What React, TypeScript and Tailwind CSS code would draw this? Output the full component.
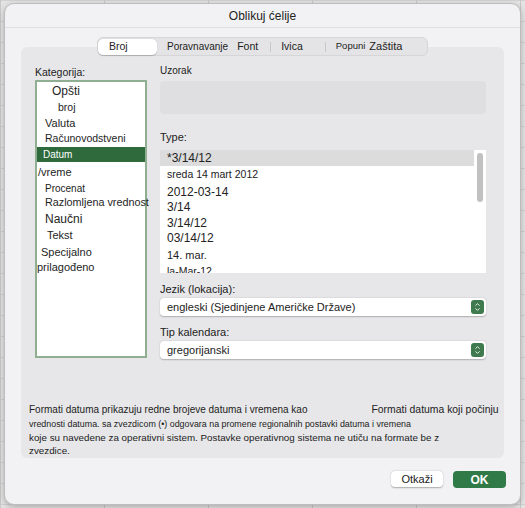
import { ChevronDown, ChevronUp } from 'lucide-react'

type Item = { label: string; h: string; pl: string; size: string; selected?: boolean }

const categories: Item[] = [
  { label: 'Opšti', h: 'h-[18px]', pl: 'pl-[15px]', size: 'text-[12px]' },
  { label: 'broj', h: 'h-[16px]', pl: 'pl-[21px]', size: 'text-[10.5px]' },
  { label: 'Valuta', h: 'h-[15px]', pl: 'pl-[8px]', size: 'text-[11px]' },
  { label: 'Računovodstveni', h: 'h-[16px]', pl: 'pl-[8px]', size: 'text-[10.5px]' },
  { label: 'Datum', h: 'h-[15px]', pl: 'pl-[6px]', size: 'text-[10px]', selected: true },
  { label: '/vreme', h: 'h-[20px]', pl: 'pl-[1px]', size: 'text-[11px]' },
  { label: 'Procenat', h: 'h-[12px]', pl: 'pl-[8px]', size: 'text-[10px]' },
  { label: 'Razlomljena vrednost', h: 'h-[17px]', pl: 'pl-[8px]', size: 'text-[10.8px]' },
  { label: 'Naučni', h: 'h-[16px]', pl: 'pl-[8px]', size: 'text-[12px]' },
  { label: 'Tekst', h: 'h-[17px]', pl: 'pl-[10px]', size: 'text-[11px]' },
  { label: 'Specijalno', h: 'h-[16px]', pl: 'pl-[4px]', size: 'text-[11px]' },
  { label: 'prilagođeno', h: 'h-[15px]', pl: 'pl-0', size: 'text-[11px]' },
]

const types: Item[] = [
  { label: '*3/14/12', h: 'h-[16px]', pl: 'pl-[7px]', size: 'text-[12px]', selected: true },
  { label: 'sreda 14 mart 2012', h: 'h-[18px]', pl: 'pl-[7px]', size: 'text-[10.5px]' },
  { label: '2012-03-14', h: 'h-[15px]', pl: 'pl-[7px]', size: 'text-[12px]' },
  { label: '3/14', h: 'h-[16px]', pl: 'pl-[7px]', size: 'text-[12px]' },
  { label: '3/14/12', h: 'h-[15px]', pl: 'pl-[7px]', size: 'text-[12px]' },
  { label: '03/14/12', h: 'h-[16px]', pl: 'pl-[7px]', size: 'text-[12px]' },
  { label: '14. mar.', h: 'h-[19px]', pl: 'pl-[7px]', size: 'text-[11px]' },
  { label: 'la-Mar-12', h: 'h-[13px]', pl: 'pl-[7px]', size: 'text-[10.5px]' },
]

function Stepper() {
  return (
    <span className="flex h-[14px] w-[13px] flex-col items-center justify-center rounded-[3px] bg-[#3f7a4f] text-white">
      <ChevronUp size={7} strokeWidth={3} className="-mb-[1px]" />
      <ChevronDown size={7} strokeWidth={3} className="-mt-[1px]" />
    </span>
  )
}

function Select({ value }: { value: string }) {
  return (
    <div className="flex h-[18px] items-center justify-between rounded-[4px] bg-white pl-[7px] pr-[2px] shadow-[0_0.5px_1.5px_rgba(0,0,0,0.25)]">
      <span className="text-[11px] text-[#222]">{value}</span>
      <Stepper />
    </div>
  )
}

export default function App() {
  return (
    <div className="h-[508px] w-[525px] overflow-hidden bg-[#e4e4e4] bg-[linear-gradient(90deg,#c8c8c8_1px,transparent_1px),linear-gradient(#d2d2d2_1px,transparent_1px)] bg-[size:104px_100%,100%_21px] pl-[4px] pt-[3px] font-['Liberation_Sans',Arial,sans-serif] text-[#222]">
      <div className="flex h-[502px] w-[517px] flex-col rounded-[10px] border border-[#bdbdbd] bg-[#f2f2f4] shadow-[0_2px_6px_rgba(0,0,0,0.25)]">
        {/* Titlebar */}
        <div className="flex h-[24px] items-center justify-center border-b border-[#e0e0e2] text-[12px]">
          Oblikuj ćelije
        </div>

        <div className="px-[16px] pt-[9px]">
          {/* Tabs */}
          <div className="relative z-10 mx-auto -mb-[9px] flex h-[19px] w-[331px] items-center rounded-[6px] border border-[#d6d6d8] bg-[#e4e4e6] text-[10px]">
            <span className="flex h-[16px] w-[59px] items-center rounded-[5px] bg-white pl-[11px] text-[10.5px] shadow-[0_0.5px_1px_rgba(0,0,0,0.2)]">
              Broj
            </span>
            <span className="ml-[10px]">Poravnavanje</span>
            <span className="ml-[9px] text-[10.5px]">Font</span>
            <span className="ml-[12px] h-[10px] w-px bg-[#c8c8ca]" />
            <span className="ml-[10px] text-[10.5px]">Ivica</span>
            <span className="ml-[22px] h-[10px] w-px bg-[#c8c8ca]" />
            <span className="ml-[10px] text-[9.5px]">Popuni</span>
            <span className="ml-[4px] text-[11px]">Zaštita</span>
          </div>

          {/* Panel */}
          <div className="flex h-[411px] flex-col rounded-[6px] bg-[#e7e7e9]">
            <div className="flex pl-[14px] pt-[17px]">
              {/* Category column */}
              <div className="w-[112px] pt-[2px]">
                <div className="h-[13px] text-[10.5px] leading-[13px]">Kategorija:</div>
                <div className="mt-[1px] h-[278px] border-2 border-[#8fae92] bg-white">
                  {categories.map((c) => (
                    <div
                      key={c.label}
                      className={`flex items-center whitespace-nowrap ${c.h} ${c.pl} ${c.size} ${
                        c.selected ? 'bg-[#2e6a3c] text-white' : 'text-[#1e1e1e]'
                      }`}
                    >
                      {c.label}
                    </div>
                  ))}
                </div>
              </div>

              {/* Right column */}
              <div className="ml-[13px] w-[326px]">
                <div className="h-[13px] text-[10px] leading-[13px]">Uzorak</div>
                <div className="mt-[4px] h-[33px] rounded-[4px] bg-[#dfdfe1]" />

                <div className="mt-[17px] h-[12px] text-[11px] leading-[12px]">Type:</div>
                <div className="mt-[7px] flex h-[123px] overflow-hidden bg-white">
                  <div className="flex-1">
                    {types.map((t) => (
                      <div
                        key={t.label}
                        className={`flex items-center whitespace-nowrap ${t.h} ${t.pl} ${t.size} ${
                          t.selected ? 'bg-[#dcdcdd]' : ''
                        }`}
                      >
                        {t.label}
                      </div>
                    ))}
                  </div>
                  <div className="w-[12px] pl-[3px] pt-[3px]">
                    <div className="h-[49px] w-[6px] rounded-full bg-[#c1c1c1]" />
                  </div>
                </div>

                <div className="mt-[10px] h-[12px] text-[11px] leading-[12px]">Jezik (lokacija):</div>
                <div className="mt-[3px]">
                  <Select value="engleski (Sjedinjene Američke Države)" />
                </div>
                <div className="mt-[10px] h-[12px] text-[11px] leading-[12px]">Tip kalendara:</div>
                <div className="mt-[3px]">
                  <Select value="gregorijanski" />
                </div>
              </div>
            </div>

            {/* Description */}
            <div className="mt-auto pb-[1px] pl-[8px] pr-[4px] text-[9.8px] leading-[13px]">
              <div className="flex h-[15px] items-center whitespace-nowrap text-[10px]">
                <span>Formati datuma prikazuju redne brojeve datuma i vremena kao</span>
                <span className="ml-[64px] text-[10.4px]">Formati datuma koji počinju</span>
              </div>
              <div className="h-[14px] whitespace-nowrap text-[8.9px] leading-[14px]">
                vrednosti datuma. sa zvezdicom (•) odgovara na promene regionalnih postavki datuma i vremena
              </div>
              <div className="whitespace-nowrap">
                koje su navedene za operativni sistem. Postavke operativnog sistema ne utiču na formate be z
              </div>
              <div>zvezdice.</div>
            </div>
          </div>
        </div>

        {/* Footer */}
        <div className="mt-[13px] flex justify-end gap-[10px] pr-[14px]">
          <button className="flex h-[16px] w-[52px] items-center justify-center rounded-[4px] bg-white text-[11px] shadow-[0_0.5px_1.5px_rgba(0,0,0,0.3)]">
            Otkaži
          </button>
          <button className="flex h-[17px] w-[53px] items-center justify-center rounded-[4px] bg-[#2f7a47] text-[12px] font-semibold text-white">
            OK
          </button>
        </div>
      </div>
    </div>
  )
}
